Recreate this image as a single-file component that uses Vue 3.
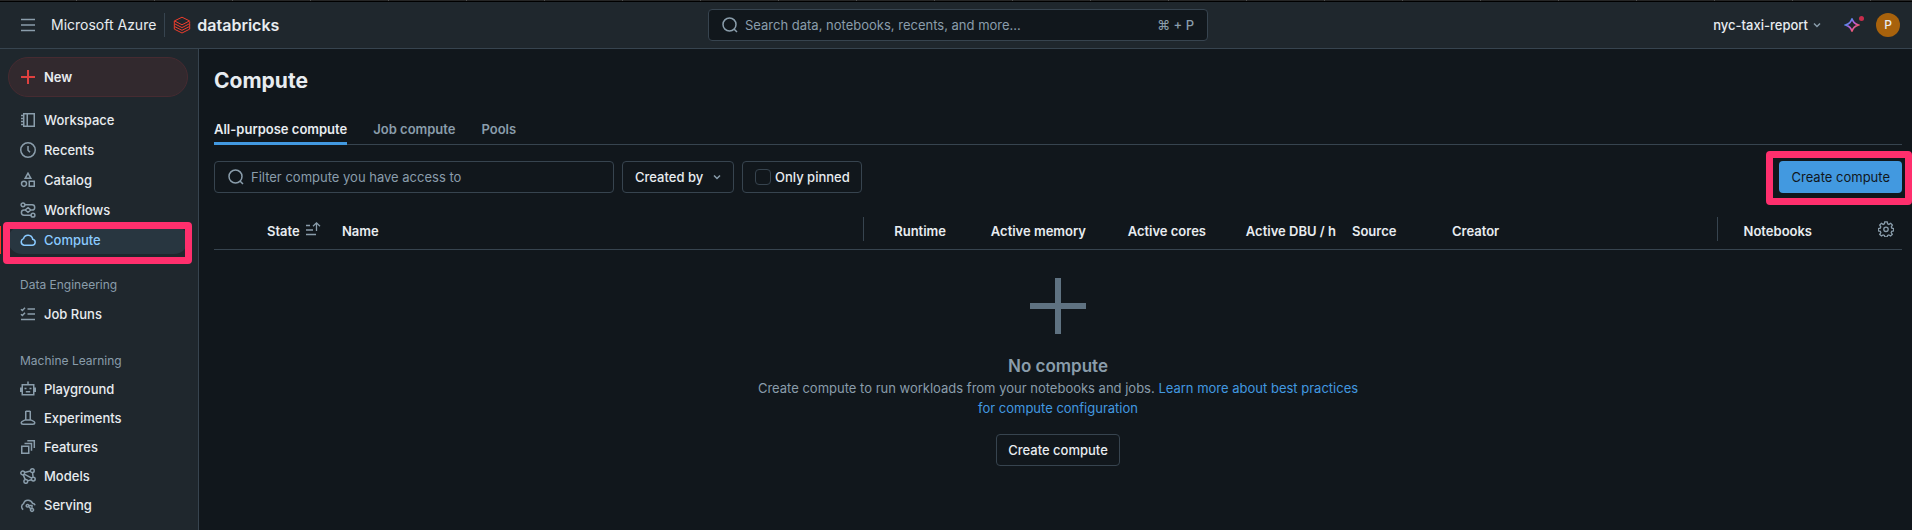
<script setup>
import { ref } from 'vue'

const search = ref('')
const filter = ref('')
const onlyPinned = ref(false)
const createdBy = ref('')

const groups = [
  {
    title: '',
    items: [
      { label: 'Workspace', icon: 'workspace' },
      { label: 'Recents', icon: 'recents' },
      { label: 'Catalog', icon: 'catalog' },
      { label: 'Workflows', icon: 'workflows' },
      { label: 'Compute', icon: 'compute', active: true },
    ],
  },
  { title: 'Data Engineering', items: [{ label: 'Job Runs', icon: 'runs' }] },
  {
    title: 'Machine Learning',
    compact: true,
    items: [
      { label: 'Playground', icon: 'playground' },
      { label: 'Experiments', icon: 'experiments' },
      { label: 'Features', icon: 'features' },
      { label: 'Models', icon: 'models' },
      { label: 'Serving', icon: 'serving' },
    ],
  },
]

const icons = {
  workspace:
    'M3.75 1.75h10.5v12.5H3.75zM7.25 1.75v12.5M1 3.5h2.5M1 6.5h2.5M1 9.5h2.5M1 12.5h2.5',
  recents: 'M8 .75a7.25 7.25 0 1 0 0 14.5A7.25 7.25 0 0 0 8 .75zM8 4v4.3l2 2',
  catalog:
    'M8 1.2 5.2 6.3h5.6zM4 9.25a2.5 2.5 0 1 0 0 5 2.5 2.5 0 0 0 0-5zM9.25 9.25h5v5h-5z',
  workflows:
    'M3 .9a1.9 1.9 0 1 0 0 3.8 1.9 1.9 0 0 0 0-3.8zM13 11.3a1.9 1.9 0 1 0 0 3.8 1.9 1.9 0 0 0 0-3.8zM8 5.7 10.8 8 8 10.3 5.2 8zM4.9 2.8h7.2a2.6 2.6 0 0 1 0 5.2h-1.3M5.2 8H4a2.6 2.6 0 0 0 0 5.2h7.1',
  compute:
    'M4 13.2h8.2a3 3 0 0 0 .5-5.95 4.75 4.75 0 0 0-9.2-.6A3.4 3.4 0 0 0 4 13.2z',
  runs: 'M1 3.2l1.4 1.3L5 1.8M1 8.2l1.4 1.3L5 6.8M7.5 3h7.5M7.5 8h7.5M1 13.4h14',
  playground:
    'M2.25 3.75h11.5v10H2.25zM8 .5v3.2M.75 6.5v4.5M15.25 6.5v4.5M4.5 7.5h2M9.5 7.5h2M5.8 10.8h4.4',
  experiments:
    'M5.75 1.25h4.5M5.75 1v8.2c0 1.2-4.5 1.8-4.5 3.3 0 1.3.8 1.75 1.9 1.75h9.7c1.1 0 1.9-.5 1.9-1.75 0-1.5-4.5-2.1-4.5-3.3V1M5.2 10h5.6',
  features: 'M1.75 7.25h7v7h-7zM4.5 4.5h7v7.2M7.3 1.75h7v7.2',
  models:
    'M2.7 3.1a1.9 1.9 0 1 0 0 3.8 1.9 1.9 0 0 0 0-3.8zM12.3.8a1.9 1.9 0 1 0 0 3.8 1.9 1.9 0 0 0 0-3.8zM13.3 9.2a1.9 1.9 0 1 0 0 3.8 1.9 1.9 0 0 0 0-3.8zM5.8 11.5a1.9 1.9 0 1 0 0 3.8 1.9 1.9 0 0 0 0-3.8zM4.6 4.6l5.8-1.5M12.5 4.6l.6 4.6M4.2 6.2l7.5 4M3.3 6.9l1.9 4.7M7.6 12.9l3.9-1.2',
  serving:
    'M3.2 12.6A3.4 3.4 0 0 1 3.5 6.7a4.7 4.7 0 0 1 9-.4c1.3.2 2.2.9 2.6 2M7.5 7.5a1.3 1.3 0 1 0 .02 0zM12 11.4a1.5 1.5 0 1 0 .02 0zM8.7 9.6l2.2 2.4M9 8.5h3v2.3',
}
</script>

<template>
  <div class="app">
    <div class="strip"></div>
    <header class="topbar">
      <div class="brand">
        <button class="icon-btn" aria-label="Toggle menu">
          <svg width="16" height="16" viewBox="0 0 16 16"><path d="M1 2.5h14M1 8h14M1 13.5h14" /></svg>
        </button>
        <span class="cloud">Microsoft Azure</span>
        <a class="logo" href="#">
          <svg width="18" height="18" viewBox="0 0 18 18">
            <path d="M1.5 4.9 9 1.2l7.5 3.7L9 8.800zM1.300 4.900v2.700L9 11.600l7.700-4V5.500M1.300 7.700v2.700L9 14.300l7.700-3.900V7.900M1.300 10.500v2.600L9 17l7.700-3.900v-2.600" />
          </svg>
          <span>databricks</span>
        </a>
      </div>
      <label class="search">
        <svg width="16" height="16" viewBox="0 0 16 16"><circle cx="7.5" cy="7.5" r="6.5" /><path d="m12 12 3 3" /></svg>
        <input v-model="search" type="text" aria-label="Search" placeholder="Search data, notebooks, recents, and more..." />
        <kbd>⌘ + P</kbd>
      </label>
      <div class="account">
        <button class="workspace">
          nyc-taxi-report
          <svg width="10" height="10" viewBox="0 0 10 10"><path d="m2 3.5 3 3 3-3" /></svg>
        </button>
        <button class="assistant" aria-label="Assistant">
          <svg width="16" height="16" viewBox="0 0 16 16">
            <defs>
              <linearGradient id="spark" x1="0" y1="0" x2="1" y2="1">
                <stop offset="0.2" stop-color="#4a8ff0" />
                <stop offset="0.5" stop-color="#c05be0" />
                <stop offset="0.85" stop-color="#ff5a4a" />
              </linearGradient>
            </defs>
            <path d="M8 1.5c.8 3.700 2.300 5.300 6.500 6.500-4.200 1.200-5.700 2.800-6.500 6.500C7.200 10.800 5.700 9.200 1.500 8 5.700 6.800 7.200 5.200 8 1.500z" stroke="url(#spark)" />
          </svg>
          <i></i>
        </button>
        <button class="avatar" aria-label="Account">P</button>
      </div>
    </header>

    <div class="body">
      <nav class="sidebar">
        <button class="new">
          <svg width="16" height="16" viewBox="0 0 16 16"><path d="M8 1v14M1 8h14" /></svg>
          New
        </button>
        <section v-for="g in groups" :key="g.title" :class="{ compact: g.compact }">
          <h2 v-if="g.title">{{ g.title }}</h2>
          <a v-for="i in g.items" :key="i.label" href="#" :class="{ active: i.active }">
            <svg width="16" height="16" viewBox="0 0 16 16"><path :d="icons[i.icon]" /></svg>
            <span>{{ i.label }}</span>
          </a>
        </section>
      </nav>

      <main>
        <h1>Compute</h1>
        <div class="tabs" role="tablist">
          <button role="tab" aria-selected="true" class="on">All-purpose compute</button>
          <button role="tab">Job compute</button>
          <button role="tab">Pools</button>
        </div>

        <div class="toolbar">
          <label class="field">
            <svg width="16" height="16" viewBox="0 0 16 16"><circle cx="7.5" cy="7.5" r="6.5" /><path d="m12 12 3 3" /></svg>
            <input v-model="filter" type="text" aria-label="Filter compute" placeholder="Filter compute you have access to" />
          </label>
          <div class="select">
            <select v-model="createdBy" aria-label="Created by">
              <option value="">Created by</option>
            </select>
            <svg width="10" height="10" viewBox="0 0 10 10"><path d="m2 3.5 3 3 3-3" /></svg>
          </div>
          <label class="check">
            <input v-model="onlyPinned" type="checkbox" />
            <span>Only pinned</span>
          </label>
          <div class="callout">
            <button class="primary">Create compute</button>
          </div>
        </div>

        <table>
          <colgroup>
            <col class="w-pin" /><col class="w-state" /><col /><col class="w-runtime" />
            <col class="w-memory" /><col class="w-cores" /><col class="w-dbu" /><col class="w-source" />
            <col class="w-creator" /><col class="w-notebooks" /><col class="w-gear" />
          </colgroup>
          <thead>
            <tr>
              <th></th>
              <th>
                <span class="sort">State
                  <svg width="16" height="16" viewBox="0 0 16 16"><path d="M1 4.5h4M1 9h7M1 13.5h10M11.5 10V2M8 5.3 11.5 1.8 15 5.3" /></svg>
                </span>
              </th>
              <th>Name</th>
              <th class="num sep"><span>Runtime</span></th>
              <th class="num">Active memory</th>
              <th class="num">Active cores</th>
              <th class="num">Active DBU / h</th>
              <th>Source</th>
              <th>Creator</th>
              <th class="num sep"><span>Notebooks</span></th>
              <th class="num">
                <button class="gear" aria-label="Column settings">
                  <svg width="16" height="16" viewBox="0 0 16 16">
                    <path d="M6.8.8h2.4l.4 2 1.300.6 1.800-1.100 1.700 1.700-1.100 1.800.5 1.300 1.900.5v2.200l-2 .5-.5 1.300 1.100 1.700-1.700 1.700-1.700-1.100-1.300.5-.5 1.600H6.900l-.5-1.600-1.300-.5-1.700 1.100-1.700-1.700 1.100-1.700-.5-1.300-2-.5V7.600l2-.5.5-1.300-1.100-1.800 1.700-1.700 1.700 1.100L6.400 2.800z" />
                    <circle cx="8" cy="8.3" r="2.2" />
                  </svg>
                </button>
              </th>
            </tr>
          </thead>
        </table>

        <div class="empty">
          <svg width="64" height="64" viewBox="0 0 64 64"><path d="M32 4v56M4 32h56" /></svg>
          <h3>No compute</h3>
          <p>
            Create compute to run workloads from your notebooks and jobs.
            <a href="#">Learn more about best practices for compute configuration</a>
          </p>
          <button class="secondary">Create compute</button>
        </div>
      </main>
    </div>
  </div>
</template>

<style>
body {
  background: #11171c;
}
</style>

<style scoped>
.app {
  --line: #37444f;
  --panel: #1f272d;
  --muted: #8a9dab;
  --text: #e8ecf0;
  --pink: #ff2f6d;
  display: flex;
  flex-direction: column;
  min-height: 100vh;
  background: #11171c;
  color: var(--text);
  font: 500 13px/20px Inter, "Liberation Sans", sans-serif;
}
.app * {
  box-sizing: border-box;
}
button,
input,
select,
kbd {
  font: inherit;
  color: inherit;
}
button {
  padding: 0;
  border: 0;
  background: none;
}
a {
  text-decoration: none;
}
svg {
  display: block;
  flex: none;
  fill: none;
  stroke: var(--muted);
  stroke-width: 1.5;
}
.strip {
  height: 2px;
  background: repeating-linear-gradient(90deg, #262626 0 76px, #505050 76px 77px, #262626 77px 78px);
  border-bottom: 1px solid #000;
}
.topbar {
  display: grid;
  grid-template-columns: 1fr 500px 1fr;
  align-items: center;
  height: 47px;
  padding: 0 12px 0 16px;
  background: var(--panel);
  border-bottom: 1px solid var(--line);
}
.brand {
  padding-left: 4px;
}
.brand,
.account,
.logo,
.workspace {
  display: flex;
  align-items: center;
}
.cloud {
  margin-left: 15px;
  padding-right: 8px;
  border-right: 1px solid var(--line);
  font-size: 14px;
  font-weight: 400;
  line-height: 24px;
}
.logo {
  margin-left: 8px;
  gap: 6px;
  color: var(--text);
  font-size: 16px;
  font-weight: 600;
}
.logo svg {
  stroke: #ee3d2c;
  stroke-width: 1;
}
.search,
.field {
  display: flex;
  align-items: center;
  gap: 7px;
  height: 32px;
  padding: 0 13px;
  border: 1px solid var(--line);
  border-radius: 4px;
  background: #11171c;
}
.search input,
.field input {
  flex: 1;
  min-width: 0;
  padding: 0;
  border: 0;
  outline: 0;
  background: none;
  font-weight: 400;
}
input::placeholder {
  color: var(--muted);
  opacity: 1;
}
kbd {
  color: var(--muted);
}
.account {
  justify-content: flex-end;
}
.workspace {
  gap: 4px;
}
.assistant {
  position: relative;
  margin: 0 16px 0 22px;
}
.assistant i {
  position: absolute;
  top: -1px;
  right: -4px;
  width: 5px;
  height: 5px;
  border-radius: 50%;
  background: #c82d4c;
}
.avatar {
  width: 24px;
  height: 24px;
  border-radius: 50%;
  background: #a8620c;
  font-size: 12px;
}
.body {
  display: flex;
  flex: 1;
}
.sidebar {
  flex: none;
  width: 199px;
  padding: 8px 10px 4px 8px;
  background: var(--panel);
  border-right: 1px solid var(--line);
}
.new {
  display: flex;
  align-items: center;
  gap: 8px;
  width: 100%;
  height: 40px;
  margin-bottom: 9px;
  padding: 0 11px;
  border: 1px solid #462b31;
  border-radius: 20px;
  background: #32292e;
  font-weight: 600;
}
.new svg {
  stroke: #e0403f;
  stroke-width: 2;
}
section {
  display: grid;
  gap: 2px;
}
section + section {
  margin-top: 16px;
}
section h2 {
  margin: 0;
  padding: 5px 12px 3px;
  color: var(--muted);
  font-size: 12px;
  font-weight: 400;
  line-height: 20px;
}
section a {
  position: relative;
  display: flex;
  align-items: center;
  gap: 8px;
  height: 28px;
  padding: 0 12px;
  border-radius: 14px;
  color: var(--text);
}
section + .compact {
  gap: 1px;
  margin-top: 18px;
}
section a.active {
  background: #283640;
  color: #8acaff;
}
.active svg {
  stroke: #8acaff;
}
.active::before {
  content: "";
  position: absolute;
  inset: 0 auto 0 -8px;
  width: 1px;
  background: #ff3621;
}
.active::after {
  content: "";
  position: absolute;
  inset: -4px -4px -10px -5px;
  border: 7px solid var(--pink);
  border-radius: 4px;
}
main {
  flex: 1;
  min-width: 0;
  padding: 16px 10px 16px 15px;
}
h1 {
  margin: 0;
  font-size: 21px;
  font-weight: 700;
  line-height: 32px;
}
.tabs {
  display: flex;
  gap: 26px;
  margin-top: 16px;
  border-bottom: 1px solid var(--line);
}
.tabs button {
  height: 32px;
  margin-bottom: -1px;
  padding-top: 2px;
  border-bottom: 3px solid transparent;
  color: var(--muted);
  font-weight: 600;
}
.tabs .on {
  border-color: #4299e0;
  color: var(--text);
}
.toolbar {
  display: flex;
  gap: 8px;
  margin-top: 16px;
}
.field {
  width: 400px;
}
.select {
  display: grid;
  align-items: center;
  width: 112px;
}
.select > * {
  grid-area: 1 / 1;
}
.select svg {
  justify-self: end;
  margin-right: 12px;
  pointer-events: none;
}
select {
  appearance: none;
  width: 100%;
  height: 32px;
  padding: 0 12px;
  border: 1px solid var(--line);
  border-radius: 4px;
  background: #11171c;
}
.check {
  display: flex;
  align-items: center;
  gap: 4px;
  height: 32px;
  padding: 0 11px 0 12px;
  border: 1px solid var(--line);
  border-radius: 4px;
}
.check input {
  appearance: none;
  width: 16px;
  height: 16px;
  margin: 0;
  border: 1px solid var(--line);
  border-radius: 4px;
}
.check input:checked {
  background: #4299e0;
}
.callout {
  position: relative;
  margin-left: auto;
}
.callout::after {
  content: "";
  position: absolute;
  inset: -10px -10px -12px -13px;
  border: 7px solid var(--pink);
  border-radius: 4px;
  pointer-events: none;
}
.primary {
  height: 32px;
  padding: 0 12px;
  border-radius: 4px;
  background: #4299e0;
  color: #11171c;
  font-weight: 400;
}
table {
  width: 100%;
  margin-top: 16px;
  table-layout: fixed;
  border-collapse: collapse;
}
th {
  height: 40px;
  padding: 0 8px 8px;
  border-bottom: 1px solid var(--line);
  font-weight: 600;
  text-align: left;
  vertical-align: bottom;
  white-space: nowrap;
}
.num {
  text-align: right;
}
.sep {
  padding-left: 0;
}
.sep span {
  display: block;
  height: 24px;
  padding-top: 4px;
  border-left: 1px solid var(--line);
}
.sort {
  display: flex;
  gap: 5px;
}
.gear {
  display: inline-flex;
  align-items: center;
  height: 24px;
  vertical-align: bottom;
}
.gear svg,
.sort svg {
  stroke-width: 1.3;
}
.w-pin { width: 45px; }
.w-state { width: 75px; }
.w-runtime { width: 91px; }
.w-memory { width: 140px; }
.w-cores { width: 120px; }
.w-dbu { width: 130px; }
.w-source { width: 100px; }
.w-creator { width: 273px; }
.w-notebooks { width: 103px; }
.w-gear { width: 82px; }
.empty {
  display: flex;
  flex-direction: column;
  align-items: center;
  margin-top: 24px;
  color: var(--muted);
}
.empty svg {
  stroke: #5f7281;
  stroke-width: 6;
}
h3 {
  margin: 16px 0 0;
  font-size: 17px;
  font-weight: 600;
  line-height: 24px;
}
p {
  max-width: 612px;
  margin: 0;
  font-weight: 400;
  text-align: center;
}
p a {
  color: #4299e0;
}
.secondary {
  height: 32px;
  margin-top: 16px;
  padding: 0 11px;
  border: 1px solid var(--line);
  border-radius: 4px;
  color: var(--text);
}
</style>
